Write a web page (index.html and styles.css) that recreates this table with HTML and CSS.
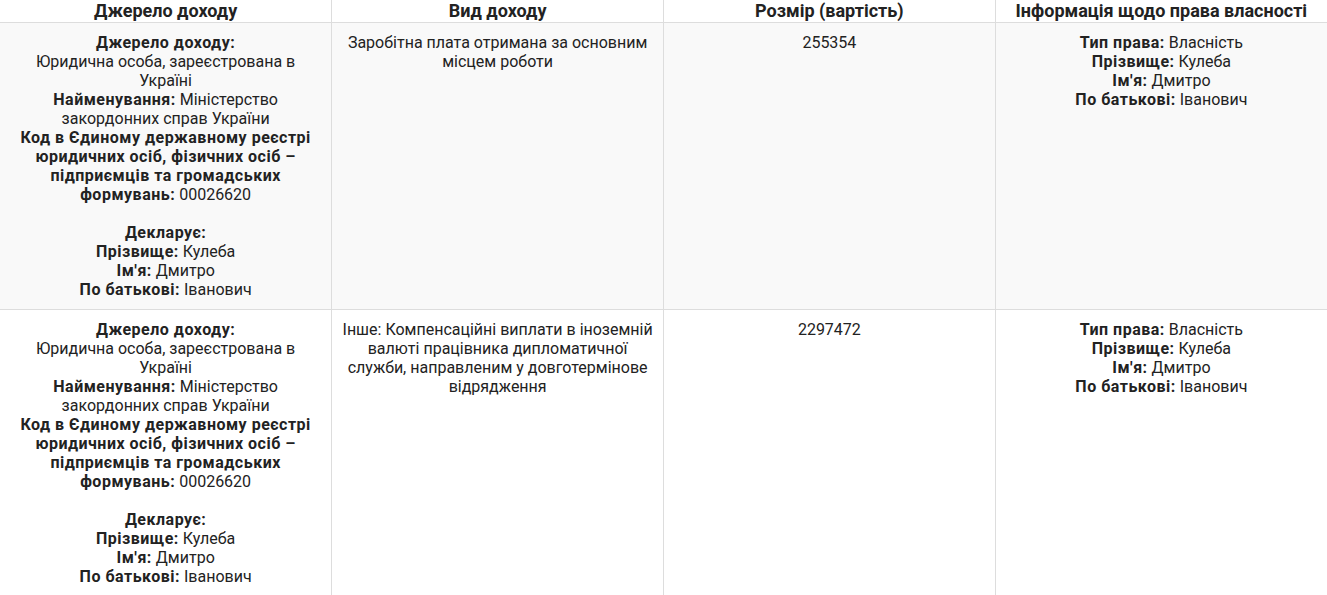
FILE: index.html
```html
<!DOCTYPE html>
<html lang="uk">

<head>
    <meta charset="UTF-8">
    <meta name="viewport" content="width=device-width, initial-scale=1.0">
    <title>Доходи</title>
    <link rel="stylesheet" href="styles.css">
</head>

<body>
    <table class="income-table">
        <thead>
            <tr>
                <th>Джерело доходу</th>
                <th>Вид доходу</th>
                <th>Розмір (вартість)</th>
                <th>Інформація щодо права власності</th>
            </tr>
        </thead>
        <tbody>
            <tr class="odd">
                <td>
                    <strong>Джерело доходу:</strong><br>
                    Юридична особа, зареєстрована в Україні<br>
                    <strong>Найменування:</strong> Міністерство закордонних справ України<br>
                    <strong>Код в Єдиному державному реєстрі юридичних осіб, фізичних осіб – підприємців та громадських формувань:</strong> 00026620<br>
                    <br>
                    <strong>Декларує:</strong><br>
                    <strong>Прізвище:</strong> Кулеба<br>
                    <strong>Ім'я:</strong> Дмитро<br>
                    <strong>По батькові:</strong> Іванович
                </td>
                <td>Заробітна плата отримана за основним місцем роботи</td>
                <td>255354</td>
                <td>
                    <strong>Тип права:</strong> Власність<br>
                    <strong>Прізвище:</strong> Кулеба<br>
                    <strong>Ім'я:</strong> Дмитро<br>
                    <strong>По батькові:</strong> Іванович
                </td>
            </tr>
            <tr>
                <td>
                    <strong>Джерело доходу:</strong><br>
                    Юридична особа, зареєстрована в Україні<br>
                    <strong>Найменування:</strong> Міністерство закордонних справ України<br>
                    <strong>Код в Єдиному державному реєстрі юридичних осіб, фізичних осіб – підприємців та громадських формувань:</strong> 00026620<br>
                    <br>
                    <strong>Декларує:</strong><br>
                    <strong>Прізвище:</strong> Кулеба<br>
                    <strong>Ім'я:</strong> Дмитро<br>
                    <strong>По батькові:</strong> Іванович
                </td>
                <td>Інше: Компенсаційні виплати в іноземній валюті працівника дипломатичної служби, направленим у довготермінове відрядження</td>
                <td>2297472</td>
                <td>
                    <strong>Тип права:</strong> Власність<br>
                    <strong>Прізвище:</strong> Кулеба<br>
                    <strong>Ім'я:</strong> Дмитро<br>
                    <strong>По батькові:</strong> Іванович
                </td>
            </tr>
        </tbody>
    </table>
</body>

</html>
```

FILE: styles.css
```css
body {
    margin: 0;
    font-family: Roboto, "Liberation Sans", Arial, sans-serif;
    font-size: 16px;
    line-height: 19px;
    color: #222;
    background: #fff;
}

.income-table {
    width: 100%;
    border-collapse: collapse;
    table-layout: fixed;
}

.income-table th,
.income-table td {
    text-align: center;
    vertical-align: top;
    border-left: 1px solid #ddd;
}

.income-table th:first-child,
.income-table td:first-child {
    border-left: none;
}

.income-table th {
    font-size: 18px;
    line-height: 21px;
    font-weight: bold;
    padding: 0 8px 1px;
    border-bottom: 1px solid #ddd;
}

.income-table td {
    padding: 10px;
    border-bottom: 1px solid #ddd;
}

.income-table tr.odd td {
    background: #f9f9f9;
}

.income-table td strong {
    font-weight: bold;
    letter-spacing: 0.5px;
}
```
